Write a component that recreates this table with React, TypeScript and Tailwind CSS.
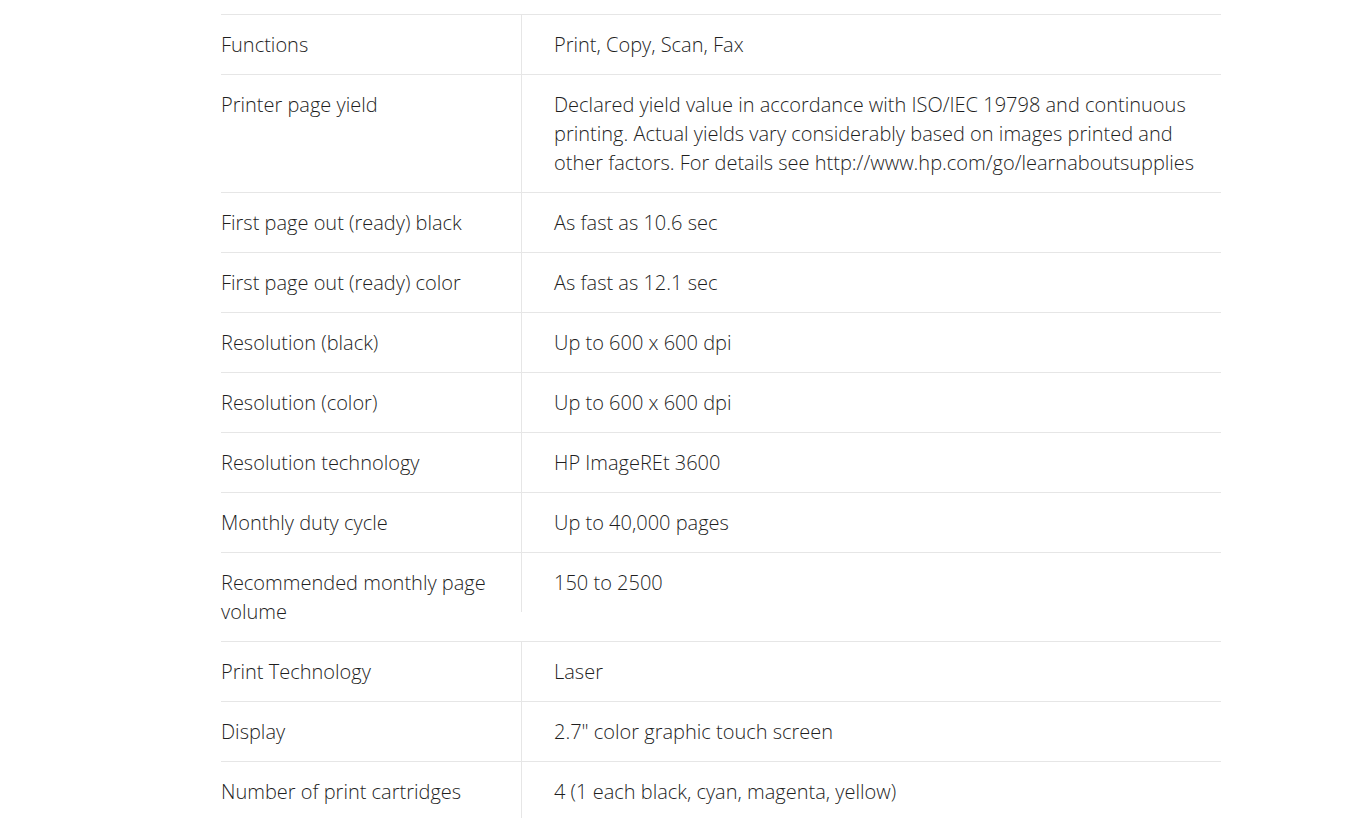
const specs: { label: string; value: string }[] = [
  { label: 'Functions', value: 'Print, Copy, Scan, Fax' },
  {
    label: 'Printer page yield',
    value:
      'Declared yield value in accordance with ISO/IEC 19798 and continuous printing. Actual yields vary considerably based on images printed and other factors. For details see http://www.hp.com/go/learnaboutsupplies',
  },
  { label: 'First page out (ready) black', value: 'As fast as 10.6 sec' },
  { label: 'First page out (ready) color', value: 'As fast as 12.1 sec' },
  { label: 'Resolution (black)', value: 'Up to 600 x 600 dpi' },
  { label: 'Resolution (color)', value: 'Up to 600 x 600 dpi' },
  { label: 'Resolution technology', value: 'HP ImageREt 3600' },
  { label: 'Monthly duty cycle', value: 'Up to 40,000 pages' },
  { label: 'Recommended monthly page volume', value: '150 to 2500' },
  { label: 'Print Technology', value: 'Laser' },
  { label: 'Display', value: '2.7" color graphic touch screen' },
  { label: 'Number of print cartridges', value: '4 (1 each black, cyan, magenta, yellow)' },
];

export default function App() {
  return (
    <div
      className="min-h-screen bg-white pt-[14px] text-[#1f1f1f]"
      style={{ fontFamily: '"Open Sans", "Liberation Sans", sans-serif' }}
    >
      <div className="ml-[221px] w-[1000px] border-t border-[#e6e6e6]">
        {specs.map((s) => (
          <div key={s.label} className="flex items-start border-b border-[#e6e6e6]">
            <div className="w-[300px] shrink-0 py-[15px] pr-[20px] text-[20px] font-light leading-[29px]">
              {s.label}
            </div>
            <div className="flex-1 border-l border-[#e6e6e6] py-[15px] pl-[32px] pr-[10px] text-[20px] font-light leading-[29px]">
              {s.value}
            </div>
          </div>
        ))}
      </div>
    </div>
  );
}
